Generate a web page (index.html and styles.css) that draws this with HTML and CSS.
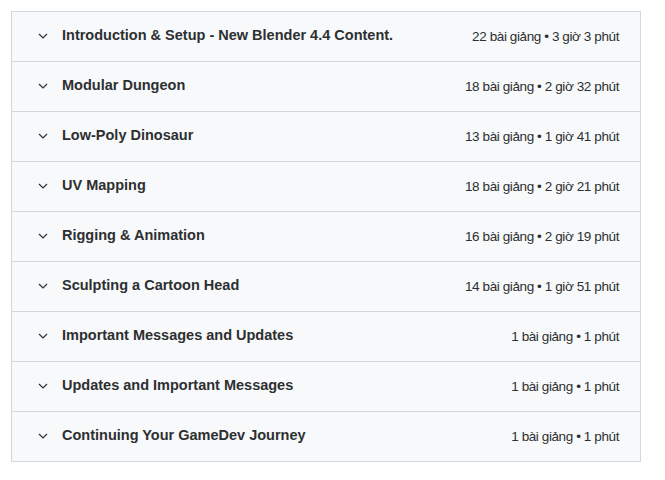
FILE: index.html
```html
<!DOCTYPE html>
<html>
<head>
<meta charset="utf-8">
<link rel="stylesheet" href="styles.css">
</head>
<body>
<div class="curriculum">
  <div class="section"><span class="chev"><svg viewBox="0 0 10 6" width="10" height="6"><path d="M1 1l4 4 4-4" fill="none" stroke="#2d2f31" stroke-width="1.2"/></svg></span><span class="title">Introduction &amp; Setup - New Blender 4.4 Content.</span><span class="meta">22 bài giảng • 3 giờ 3 phút</span></div>
  <div class="section"><span class="chev"><svg viewBox="0 0 10 6" width="10" height="6"><path d="M1 1l4 4 4-4" fill="none" stroke="#2d2f31" stroke-width="1.2"/></svg></span><span class="title">Modular Dungeon</span><span class="meta">18 bài giảng • 2 giờ 32 phút</span></div>
  <div class="section"><span class="chev"><svg viewBox="0 0 10 6" width="10" height="6"><path d="M1 1l4 4 4-4" fill="none" stroke="#2d2f31" stroke-width="1.2"/></svg></span><span class="title">Low-Poly Dinosaur</span><span class="meta">13 bài giảng • 1 giờ 41 phút</span></div>
  <div class="section"><span class="chev"><svg viewBox="0 0 10 6" width="10" height="6"><path d="M1 1l4 4 4-4" fill="none" stroke="#2d2f31" stroke-width="1.2"/></svg></span><span class="title">UV Mapping</span><span class="meta">18 bài giảng • 2 giờ 21 phút</span></div>
  <div class="section"><span class="chev"><svg viewBox="0 0 10 6" width="10" height="6"><path d="M1 1l4 4 4-4" fill="none" stroke="#2d2f31" stroke-width="1.2"/></svg></span><span class="title">Rigging &amp; Animation</span><span class="meta">16 bài giảng • 2 giờ 19 phút</span></div>
  <div class="section"><span class="chev"><svg viewBox="0 0 10 6" width="10" height="6"><path d="M1 1l4 4 4-4" fill="none" stroke="#2d2f31" stroke-width="1.2"/></svg></span><span class="title">Sculpting a Cartoon Head</span><span class="meta">14 bài giảng • 1 giờ 51 phút</span></div>
  <div class="section"><span class="chev"><svg viewBox="0 0 10 6" width="10" height="6"><path d="M1 1l4 4 4-4" fill="none" stroke="#2d2f31" stroke-width="1.2"/></svg></span><span class="title">Important Messages and Updates</span><span class="meta">1 bài giảng • 1 phút</span></div>
  <div class="section"><span class="chev"><svg viewBox="0 0 10 6" width="10" height="6"><path d="M1 1l4 4 4-4" fill="none" stroke="#2d2f31" stroke-width="1.2"/></svg></span><span class="title">Updates and Important Messages</span><span class="meta">1 bài giảng • 1 phút</span></div>
  <div class="section"><span class="chev"><svg viewBox="0 0 10 6" width="10" height="6"><path d="M1 1l4 4 4-4" fill="none" stroke="#2d2f31" stroke-width="1.2"/></svg></span><span class="title">Continuing Your GameDev Journey</span><span class="meta">1 bài giảng • 1 phút</span></div>
</div>
</body>
</html>
```
FILE: styles.css
```css
html, body {
  margin: 0;
  padding: 0;
  background: #ffffff;
}
body {
  padding: 11px 24px 0 11px;
  font-family: "Liberation Sans", Arial, sans-serif;
  color: #2d2f31;
}
.curriculum {
  width: 628px;
  border: 1px solid #d1d7dc;
  border-top: none;
  background: #f7f9fa;
}
.section {
  display: flex;
  align-items: center;
  height: 49px;
  border-top: 1px solid #d1d7dc;
  padding: 0 21px 0 26px;
}
.chev {
  display: flex;
  width: 24px;
  margin-top: -1px;
}
.chev svg { display: block; }
.title {
  flex: 1;
  font-weight: bold;
  font-size: 14.5px;
  margin-top: -3px;
}
.meta {
  font-size: 13.5px;
  letter-spacing: -0.4px;
  margin-top: -1px;
}
```
